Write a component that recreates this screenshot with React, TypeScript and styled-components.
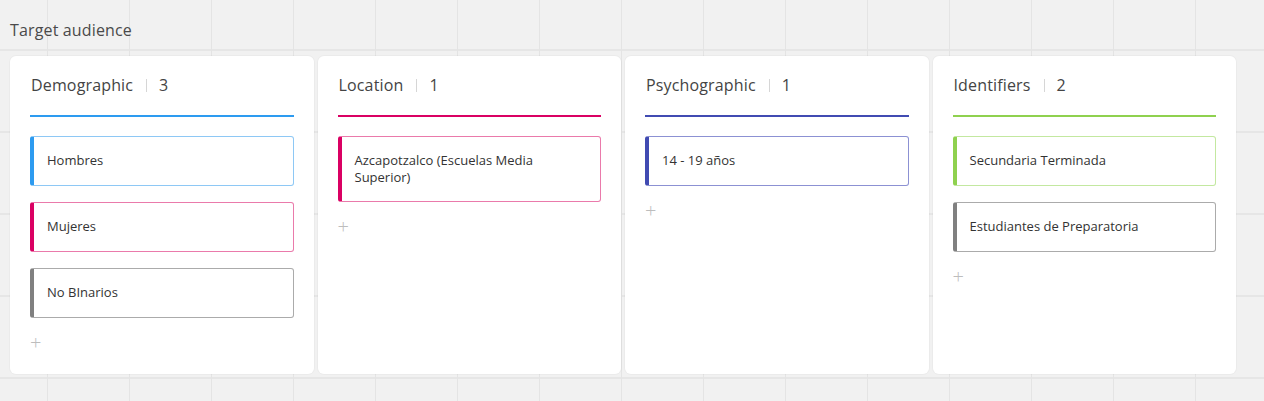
import React from "react";
import styled, { createGlobalStyle } from "styled-components";

const Global = createGlobalStyle`
  html, body { margin: 0; padding: 0; }
  body { font-family: "Open Sans", "Noto Sans", sans-serif; background: #f1f1f1; }
`;

const Canvas = styled.div`
  width: 1264px;
  height: 401px;
  box-sizing: border-box;
  padding: 20px 28px 0 10px;
  background-color: #f1f1f1;
  background-image:
    linear-gradient(to right, #e4e4e4 1px, transparent 1px),
    linear-gradient(to bottom, #e6e6e6 2px, transparent 2px);
  background-size: 82px 82px;
  background-position: 47px 49px;
  overflow: hidden;
`;

const Title = styled.div`
  font-size: 16px;
  line-height: 20px;
  letter-spacing: 0.15px;
  color: #4a4a4a;
  height: 20px;
  margin-bottom: 16px;
`;

const Board = styled.div`
  display: grid;
  grid-template-columns: repeat(4, 1fr);
  gap: 4px;
`;

const Column = styled.div`
  background: #fff;
  border-radius: 6px;
  height: 318px;
  box-sizing: border-box;
  padding: 18px 20px 0 20px;
  box-shadow: 0 0 0 1px rgba(0, 0, 0, 0.025);
`;

const Header = styled.div<{ $color: string }>`
  display: flex;
  align-items: center;
  height: 22px;
  padding-left: 1px;
  padding-bottom: 19px;
  border-bottom: 2px solid ${(p) => p.$color};
  font-size: 16px;
  letter-spacing: 0.15px;
  color: #444;
  margin-bottom: 19px;
`;

const Sep = styled.span`
  display: inline-block;
  width: 1px;
  height: 13px;
  background: #d6d6d6;
  margin: 0 12px 0 13px;
`;

const Cards = styled.div`
  display: flex;
  flex-direction: column;
  gap: 16px;
`;

const Card = styled.div<{ $color: string; $border: string }>`
  box-sizing: border-box;
  min-height: 50px;
  padding: 15px 16px 15px 13px;
  border: 1px solid ${(p) => p.$border};
  border-left: 4px solid ${(p) => p.$color};
  border-radius: 3px;
  font-size: 13px;
  line-height: 17px;
  color: #333;
  background: #fff;
`;

const Add = styled.div`
  margin-top: 17px;
  margin-left: 0px;
  font-size: 20px;
  line-height: 16px;
  font-weight: 300;
  color: #bdbdbd;
`;

type Item = { text: string; color: string; border: string };
type Col = { title: string; color: string; items: Item[] };

const blue = { color: "#2d9bf0", border: "#8ec8f5" };
const pink = { color: "#da0063", border: "#ea7aab" };
const gray = { color: "#808080", border: "#ababab" };
const purple = { color: "#414bb2", border: "#8c91d3" };
const green = { color: "#8fd14f", border: "#c3e8a0" };

const columns: Col[] = [
  {
    title: "Demographic",
    color: "#2d9bf0",
    items: [
      { text: "Hombres", ...blue },
      { text: "Mujeres", ...pink },
      { text: "No BInarios", ...gray },
    ],
  },
  {
    title: "Location",
    color: "#da0063",
    items: [{ text: "Azcapotzalco (Escuelas Media Superior)", ...pink }],
  },
  {
    title: "Psychographic",
    color: "#414bb2",
    items: [{ text: "14 - 19 años", ...purple }],
  },
  {
    title: "Identifiers",
    color: "#8fd14f",
    items: [
      { text: "Secundaria Terminada", ...green },
      { text: "Estudiantes de Preparatoria", ...gray },
    ],
  },
];

export default function App() {
  return (
    <>
      <Global />
      <Canvas>
        <Title>Target audience</Title>
        <Board>
          {columns.map((c) => (
            <Column key={c.title}>
              <Header $color={c.color}>
                {c.title}
                <Sep />
                {c.items.length}
              </Header>
              <Cards>
                {c.items.map((i) => (
                  <Card key={i.text} $color={i.color} $border={i.border}>
                    {i.text}
                  </Card>
                ))}
              </Cards>
              <Add>+</Add>
            </Column>
          ))}
        </Board>
      </Canvas>
    </>
  );
}
